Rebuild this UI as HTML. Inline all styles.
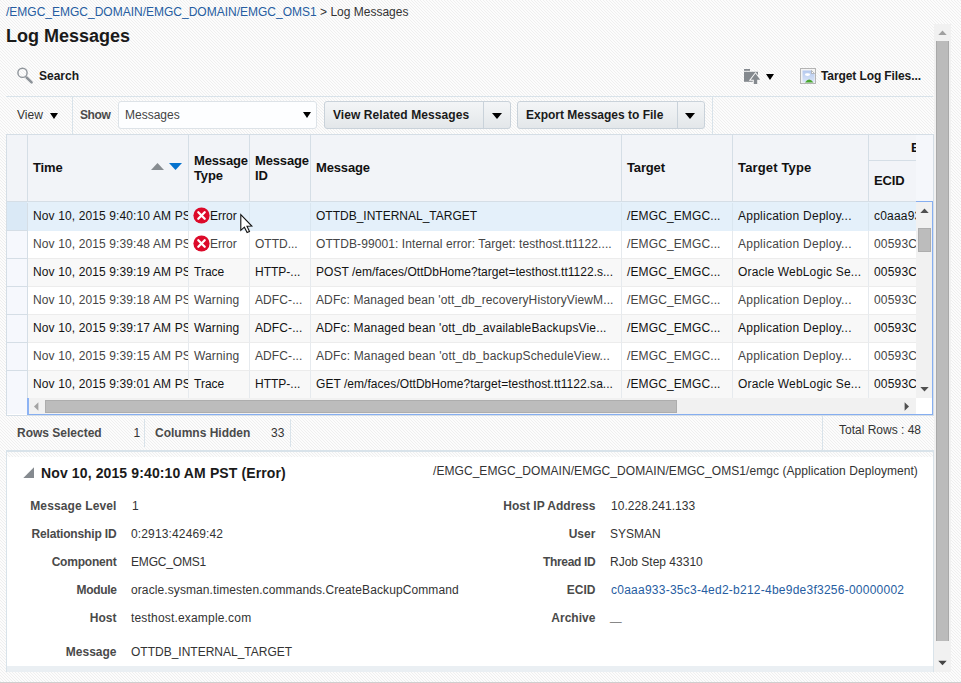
<!DOCTYPE html>
<html lang="en"><head><meta charset="utf-8"><title>Log Messages</title>
<style>
html,body{margin:0;padding:0}
body{width:961px;height:683px;position:relative;overflow:hidden;background:#f8f8f8;font-family:"Liberation Sans",Arial,sans-serif;font-size:12px;line-height:14px;color:#222}
#bg{position:absolute;left:0;top:0;width:961px;height:683px}
.a{position:absolute;white-space:nowrap}
.b{font-weight:bold}
.ln{position:absolute;background:#d9e3ea}
a{color:#265da1;text-decoration:none}
/* toolbar */
.btn{position:absolute;top:101px;height:26px;border:1px solid #c9d2da;border-radius:3px;background:linear-gradient(#f3f5f7,#e3e7ea);box-sizing:content-box}
.btn .dv{position:absolute;top:0;width:1px;height:26px;background:#c9d2da}
.btn .t{position:absolute;top:6px;font-weight:bold;color:#1a1a1a;white-space:nowrap}
.tri{position:absolute;width:0;height:0;border-left:5px solid transparent;border-right:5px solid transparent;border-top:6px solid #000}
#sel{position:absolute;left:118px;top:101px;width:197px;height:26px;border:1px solid #dde3e8;border-radius:3px;background:#fdfeff}
/* table */
#tbl{position:absolute;left:6px;top:134px;width:926px;height:280px;border:1px solid #d5dee6;background:#fff}
#hdr{position:absolute;left:7px;top:135px;width:926px;height:66px;background:#f2f4f8}
.h{position:absolute;font-weight:bold;font-size:13px;line-height:15px;color:#111;white-space:nowrap;letter-spacing:-0.15px}
.vb{position:absolute;width:1px;background:#d5dee6}
.row{position:absolute;left:7px;width:909px;height:28px;background:#fff}
.row.band{background:#f8f8f8}
.row.sel{background:#e4f0fa}
.row .rh{position:absolute;left:0;top:0;width:20px;height:27px;background:#f6f8fd;border-bottom:1px solid #d5dee6;border-right:1px solid #d5dee6}
.row.sel .rh{background:#dae9f6}
.row .c{position:absolute;top:0;height:28px;box-sizing:border-box;border-right:1px solid #e6eaee;border-bottom:1px solid #ececec;overflow:hidden;white-space:nowrap;line-height:14px;padding-top:6px;color:#131313}
.row.lt .c{color:#454545}
.row.sel .c{border-bottom-color:#e4f0fa;border-right-color:#d9e6f0}
.row .c6{border-right:none}
.err{position:absolute;left:4.2px;top:4.3px}
.et{position:absolute;left:21.1px;top:6px}
/* detail */
.lbl{position:absolute;font-weight:bold;color:#4a4a4a;text-align:right;white-space:nowrap}
.val{position:absolute;color:#333;white-space:nowrap}

</style></head>
<body>
<svg id="bg" width="961" height="683" shape-rendering="crispEdges"><defs><pattern id="st" width="3" height="3" patternUnits="userSpaceOnUse"><rect width="3" height="3" fill="#fcfcfc"/><rect x="0" y="0" width="1" height="1" fill="#efefef"/><rect x="1" y="1" width="1" height="1" fill="#efefef"/><rect x="2" y="2" width="1" height="1" fill="#efefef"/></pattern></defs><rect width="961" height="683" fill="url(#st)"/><rect x="0" y="682" width="961" height="1" fill="#cfcfcf"/></svg>

<div class="a" style="left:6px;top:5px"><a>/EMGC_EMGC_DOMAIN/EMGC_DOMAIN/EMGC_OMS1</a> <span style="color:#333">&gt; Log Messages</span></div>
<div class="a b" style="left:6px;top:26px;font-size:18px;line-height:20px;color:#1a1a1a">Log Messages</div>

<!-- search -->
<svg class="a" style="left:16px;top:67px" width="19" height="19" viewBox="0 0 19 19"><circle cx="6.5" cy="5.8" r="4.6" fill="none" stroke="#8f959b" stroke-width="1.4"/><path d="M10.6 10.5 L15.6 15.4" stroke="#8b9197" stroke-width="2.5" stroke-linecap="round"/></svg>
<div class="a b" style="left:39px;top:69px;color:#1a1a1a">Search</div>

<!-- top right icons -->
<svg class="a" style="left:743px;top:68px" width="19" height="17" viewBox="0 0 19 17"><rect x="1" y="1" width="6" height="1.8" fill="#84898e"/><rect x="1" y="3.8" width="14" height="10" fill="#84898e"/><path d="M12.5 5.6 L17.2 11.7 H14.2 V16 H10.8 V11.7 H7.8 Z" fill="#84898e" stroke="#f8f8f8" stroke-width="2" paint-order="stroke"/></svg>
<div class="tri" style="left:766px;top:74px;border-left-width:4.7px;border-right-width:4.7px"></div>
<svg class="a" style="left:800px;top:68px" width="16" height="16" viewBox="0 0 16 16"><rect x="0.5" y="0.5" width="15" height="15" fill="#f4f4f4" stroke="#b4b4b4"/><defs><linearGradient id="sky" x1="0" y1="0" x2="0" y2="1"><stop offset="0" stop-color="#b4c8ee"/><stop offset="1" stop-color="#dbe6f8"/></linearGradient></defs><path d="M2.5 2.5 H11.5 L14.5 5.5 V14.5 H2.5 Z" fill="url(#sky)"/><path d="M11.5 2.5 V5.5 H14.5 Z" fill="#fff" stroke="#999" stroke-width="0.6"/><ellipse cx="7.5" cy="6.6" rx="2.6" ry="1.3" fill="#fff"/><path d="M5 14.5 Q9 8.5 13.5 14.5 Z" fill="#4aa62e"/></svg>
<div class="a b" style="left:821px;top:69px;color:#1a1a1a;letter-spacing:-0.1px">Target Log Files...</div>

<!-- toolbar -->
<div class="ln" style="left:6px;top:96px;width:927px;height:1px"></div>
<div class="ln" style="left:72px;top:96px;width:1px;height:38px"></div>
<div class="ln" style="left:712px;top:96px;width:1px;height:38px"></div>
<div class="a" style="left:17px;top:108px;color:#333">View</div>
<div class="tri" style="left:50px;top:113px;border-left-width:4.5px;border-right-width:4.5px"></div>
<div class="a b" style="left:80px;top:108px;color:#4a4a4a;letter-spacing:-0.4px">Show</div>
<div id="sel"><div class="a" style="left:6px;top:6px;color:#444">Messages</div><div class="tri" style="left:184px;top:10px;border-left-width:4px;border-right-width:4px;border-top-width:6px"></div></div>
<div class="btn" style="left:324px;width:185px"><div class="t" style="left:8px;letter-spacing:0.08px">View Related Messages</div><div class="dv" style="left:158px"></div><div class="tri" style="left:166.5px;top:11px"></div></div>
<div class="btn" style="left:517px;width:186px"><div class="t" style="left:8px">Export Messages to File</div><div class="dv" style="left:159px"></div><div class="tri" style="left:167px;top:11px"></div></div>

<!-- table -->
<div id="tbl"></div>
<div id="hdr"></div>
<div class="h" style="left:33px;top:160px">Time</div>
<svg class="a" style="left:150px;top:162px" width="34" height="9" viewBox="0 0 34 9"><path d="M1 8 L7.5 1 L14 8 Z" fill="#878c91"/><path d="M19 1 L32 1 L25.5 8 Z" fill="#0572ce"/></svg>
<div class="h" style="left:194px;top:153px">Message<br>Type</div>
<div class="h" style="left:255px;top:153px">Message<br>ID</div>
<div class="h" style="left:316px;top:160px">Message</div>
<div class="h" style="left:627px;top:160px">Target</div>
<div class="h" style="left:738px;top:160px;letter-spacing:0.15px">Target Type</div>
<div class="h" style="left:874px;top:173px">ECID</div>
<div class="h" style="left:911px;top:140px;width:5px;overflow:hidden">E</div>
<div class="ln" style="left:869px;top:160px;width:47px;height:1px;background:#d5dee6"></div>
<div class="a" style="left:916px;top:135px;width:17px;height:66px;background:#f5f7fb"></div>
<div class="ln" style="left:6px;top:201px;width:927px;height:1px;background:#d5dee6"></div>
<div class="a" style="left:7px;top:202px;width:909px;height:1px;background:#e4f0fa"></div><div class="a" style="left:7px;top:202px;width:20px;height:1px;background:#dae9f6"></div>
<div id="rows">
<div class="row sel" style="top:203px">
<div class="rh"></div>
<div class="c c0" style="left:21px;width:161px;padding-left:5px;letter-spacing:0.12px">Nov 10, 2015 9:40:10 AM PST</div>
<div class="c c1" style="left:182px;width:61px;padding-left:5px"><svg class="err" width="17" height="17" viewBox="0 0 17 17"><circle cx="8.5" cy="8.5" r="8.1" fill="#dc0a2a"/><path d="M5.3 5.3 L11.7 11.7 M11.7 5.3 L5.3 11.7" stroke="#fff" stroke-width="2.3" stroke-linecap="round"/></svg><span class="et">Error</span></div>
<div class="c c2" style="left:243px;width:61px;padding-left:5px"></div>
<div class="c c3" style="left:304px;width:311px;padding-left:5px">OTTDB_INTERNAL_TARGET</div>
<div class="c c4" style="left:615px;width:111px;padding-left:5px;letter-spacing:0.12px">/EMGC_EMGC...</div>
<div class="c c5" style="left:726px;width:136px;padding-left:5px;letter-spacing:0.25px">Application Deploy...</div>
<div class="c c6" style="left:862px;width:48px;padding-left:5px;letter-spacing:0.2px">c0aaa933-35c3</div>
</div>
<div class="row lt" style="top:231px">
<div class="rh"></div>
<div class="c c0" style="left:21px;width:161px;padding-left:5px;letter-spacing:0.12px">Nov 10, 2015 9:39:48 AM PST</div>
<div class="c c1" style="left:182px;width:61px;padding-left:5px"><svg class="err" width="17" height="17" viewBox="0 0 17 17"><circle cx="8.5" cy="8.5" r="8.1" fill="#dc0a2a"/><path d="M5.3 5.3 L11.7 11.7 M11.7 5.3 L5.3 11.7" stroke="#fff" stroke-width="2.3" stroke-linecap="round"/></svg><span class="et">Error</span></div>
<div class="c c2" style="left:243px;width:61px;padding-left:5px">OTTD...</div>
<div class="c c3" style="left:304px;width:311px;padding-left:5px;letter-spacing:0.085px">OTTDB-99001: Internal error: Target: testhost.tt1122....</div>
<div class="c c4" style="left:615px;width:111px;padding-left:5px;letter-spacing:0.12px">/EMGC_EMGC...</div>
<div class="c c5" style="left:726px;width:136px;padding-left:5px;letter-spacing:0.25px">Application Deploy...</div>
<div class="c c6" style="left:862px;width:48px;padding-left:5px;letter-spacing:0.2px">00593Ckq</div>
</div>
<div class="row band" style="top:259px">
<div class="rh"></div>
<div class="c c0" style="left:21px;width:161px;padding-left:5px;letter-spacing:0.12px">Nov 10, 2015 9:39:19 AM PST</div>
<div class="c c1" style="left:182px;width:61px;padding-left:5px">Trace</div>
<div class="c c2" style="left:243px;width:61px;padding-left:5px">HTTP-...</div>
<div class="c c3" style="left:304px;width:311px;padding-left:5px;letter-spacing:0.02px">POST /em/faces/OttDbHome?target=testhost.tt1122.s...</div>
<div class="c c4" style="left:615px;width:111px;padding-left:5px;letter-spacing:0.12px">/EMGC_EMGC...</div>
<div class="c c5" style="left:726px;width:136px;padding-left:5px;letter-spacing:0.16px">Oracle WebLogic Se...</div>
<div class="c c6" style="left:862px;width:48px;padding-left:5px;letter-spacing:0.2px">00593Ckq</div>
</div>
<div class="row lt" style="top:287px">
<div class="rh"></div>
<div class="c c0" style="left:21px;width:161px;padding-left:5px;letter-spacing:0.12px">Nov 10, 2015 9:39:18 AM PST</div>
<div class="c c1" style="left:182px;width:61px;padding-left:5px;letter-spacing:0.15px">Warning</div>
<div class="c c2" style="left:243px;width:61px;padding-left:5px;letter-spacing:0.1px">ADFC-...</div>
<div class="c c3" style="left:304px;width:311px;padding-left:5px;letter-spacing:0.12px">ADFc: Managed bean 'ott_db_recoveryHistoryViewM...</div>
<div class="c c4" style="left:615px;width:111px;padding-left:5px;letter-spacing:0.12px">/EMGC_EMGC...</div>
<div class="c c5" style="left:726px;width:136px;padding-left:5px;letter-spacing:0.25px">Application Deploy...</div>
<div class="c c6" style="left:862px;width:48px;padding-left:5px;letter-spacing:0.2px">00593Ckq</div>
</div>
<div class="row band" style="top:315px">
<div class="rh"></div>
<div class="c c0" style="left:21px;width:161px;padding-left:5px;letter-spacing:0.12px">Nov 10, 2015 9:39:17 AM PST</div>
<div class="c c1" style="left:182px;width:61px;padding-left:5px;letter-spacing:0.15px">Warning</div>
<div class="c c2" style="left:243px;width:61px;padding-left:5px;letter-spacing:0.1px">ADFC-...</div>
<div class="c c3" style="left:304px;width:311px;padding-left:5px;letter-spacing:0.157px">ADFc: Managed bean 'ott_db_availableBackupsVie...</div>
<div class="c c4" style="left:615px;width:111px;padding-left:5px;letter-spacing:0.12px">/EMGC_EMGC...</div>
<div class="c c5" style="left:726px;width:136px;padding-left:5px;letter-spacing:0.25px">Application Deploy...</div>
<div class="c c6" style="left:862px;width:48px;padding-left:5px;letter-spacing:0.2px">00593Ckq</div>
</div>
<div class="row lt" style="top:343px">
<div class="rh"></div>
<div class="c c0" style="left:21px;width:161px;padding-left:5px;letter-spacing:0.12px">Nov 10, 2015 9:39:15 AM PST</div>
<div class="c c1" style="left:182px;width:61px;padding-left:5px;letter-spacing:0.15px">Warning</div>
<div class="c c2" style="left:243px;width:61px;padding-left:5px;letter-spacing:0.1px">ADFC-...</div>
<div class="c c3" style="left:304px;width:311px;padding-left:5px;letter-spacing:0.163px">ADFc: Managed bean 'ott_db_backupScheduleView...</div>
<div class="c c4" style="left:615px;width:111px;padding-left:5px;letter-spacing:0.12px">/EMGC_EMGC...</div>
<div class="c c5" style="left:726px;width:136px;padding-left:5px;letter-spacing:0.25px">Application Deploy...</div>
<div class="c c6" style="left:862px;width:48px;padding-left:5px;letter-spacing:0.2px">00593Ckq</div>
</div>
<div class="row band" style="top:371px">
<div class="rh"></div>
<div class="c c0" style="left:21px;width:161px;padding-left:5px;letter-spacing:0.12px">Nov 10, 2015 9:39:01 AM PST</div>
<div class="c c1" style="left:182px;width:61px;padding-left:5px">Trace</div>
<div class="c c2" style="left:243px;width:61px;padding-left:5px">HTTP-...</div>
<div class="c c3" style="left:304px;width:311px;padding-left:5px;letter-spacing:0.044px">GET /em/faces/OttDbHome?target=testhost.tt1122.sa...</div>
<div class="c c4" style="left:615px;width:111px;padding-left:5px;letter-spacing:0.12px">/EMGC_EMGC...</div>
<div class="c c5" style="left:726px;width:136px;padding-left:5px;letter-spacing:0.16px">Oracle WebLogic Se...</div>
<div class="c c6" style="left:862px;width:48px;padding-left:5px;letter-spacing:0.2px">00593Ckq</div>
</div>
</div>
<!-- header/col borders -->
<div class="vb" style="left:27px;top:135px;height:67px"></div>
<div class="vb" style="left:188px;top:135px;height:67px"></div>
<div class="vb" style="left:249px;top:135px;height:67px"></div>
<div class="vb" style="left:310px;top:135px;height:67px"></div>
<div class="vb" style="left:621px;top:135px;height:67px"></div>
<div class="vb" style="left:732px;top:135px;height:67px"></div>
<div class="vb" style="left:868px;top:135px;height:67px"></div>

<!-- vertical scrollbar -->
<div class="a" style="left:916px;top:201px;width:16px;height:197px;background:#f1f1f1;border-top:1px solid #86aef0;border-right:1px solid #86aef0"></div>
<div class="a" style="left:918px;top:228px;width:13px;height:24px;background:#bcbcbc;box-shadow:inset 0 0 0 1px #adadad"></div>
<svg class="a" style="left:920px;top:208px" width="9" height="6" viewBox="0 0 9 6"><path d="M0.3 5 L4.5 0.6 L8.7 5 Z" fill="#505050"/></svg>
<svg class="a" style="left:920px;top:386px" width="9" height="6" viewBox="0 0 9 6"><path d="M0.3 1 L4.5 5.4 L8.7 1 Z" fill="#505050"/></svg>
<!-- horizontal scrollbar -->
<div class="a" style="left:7px;top:398px;width:20px;height:16px;background:#f6f8fd"></div>
<div class="a" style="left:27px;top:398px;width:887px;height:16px;background:#f1f1f1;border-left:2px solid #8db3f4;border-bottom:1px solid #86aef0"></div>
<div class="a" style="left:916px;top:398px;width:16px;height:16px;background:#fff;border-right:1px solid #86aef0;border-bottom:1px solid #86aef0"></div>
<div class="a" style="left:45px;top:400px;width:632px;height:13px;background:#bcbcbc;box-shadow:inset 0 0 0 1px #adadad"></div>
<svg class="a" style="left:33px;top:402px" width="6" height="9" viewBox="0 0 6 9"><path d="M5.4 0.3 L1 4.5 L5.4 8.7 Z" fill="#a3a3a3"/></svg>
<svg class="a" style="left:904px;top:402px" width="6" height="9" viewBox="0 0 6 9"><path d="M0.6 0.3 L5 4.5 L0.6 8.7 Z" fill="#505050"/></svg>

<!-- cursor -->
<svg class="a" style="left:239px;top:212px" width="15" height="22" viewBox="0 0 15 22"><path d="M1.8 2.6 L1.8 18.4 L5.4 15.2 L8.1 20.6 L10.5 19.5 L8 14.3 L12.8 14.1 Z" fill="#fff" stroke="#111" stroke-width="1.1" stroke-linejoin="miter"/></svg>

<!-- status bar -->
<div class="a b" style="left:17px;top:426px;color:#4a4a4a">Rows Selected</div>
<div class="a" style="left:133.5px;top:426px;color:#333">1</div>
<div class="ln" style="left:144px;top:419px;width:1px;height:28px"></div>
<div class="a b" style="left:155px;top:426px;color:#4a4a4a">Columns Hidden</div>
<div class="a" style="left:271px;top:426px;color:#333">33</div>
<div class="ln" style="left:290px;top:419px;width:1px;height:28px"></div>
<div class="ln" style="left:822px;top:416px;width:1px;height:34px"></div>
<div class="a" style="left:839px;top:423px;color:#333">Total Rows : 48</div>

<!-- detail panel -->
<div class="a" style="left:6px;top:450px;width:927px;height:222px;border-left:1px solid #d9e3ea;border-top:2px solid #d9e3ea;box-sizing:border-box"></div>
<div class="a" style="left:7px;top:457px;width:926px;height:209px;background:#fff"></div>
<div class="a" style="left:7px;top:666px;width:927px;height:6px;background:#eaeff3"></div>
<div class="ln" style="left:933px;top:450px;width:1px;height:222px;background:#d9e3ea"></div>
<svg class="a" style="left:23px;top:467px" width="12" height="12" viewBox="0 0 12 12"><path d="M0.3 11 L11 0.3 L11 11 Z" fill="#858a8f"/></svg>
<div class="a b" style="left:41px;top:465px;font-size:14px;line-height:16px;color:#1a1a1a;letter-spacing:0.12px">Nov 10, 2015 9:40:10 AM PST (Error)</div>
<div class="a" style="left:433px;top:464px;color:#333;letter-spacing:0.06px">/EMGC_EMGC_DOMAIN/EMGC_DOMAIN/EMGC_OMS1/emgc (Application Deployment)</div>

<div class="lbl" style="left:16.5px;width:100px;top:499px;letter-spacing:0.12px">Message Level</div><div class="val" style="left:132px;top:499px">1</div>
<div class="lbl" style="left:16.5px;width:100px;top:527px;letter-spacing:-0.15px">Relationship ID</div><div class="val" style="left:131px;top:527px;letter-spacing:0.14px">0:2913:42469:42</div>
<div class="lbl" style="left:16.5px;width:100px;top:555px;letter-spacing:-0.2px">Component</div><div class="val" style="left:131px;top:555px;letter-spacing:-0.18px">EMGC_OMS1</div>
<div class="lbl" style="left:16.5px;width:100px;top:583px;letter-spacing:-0.35px">Module</div><div class="val" style="left:131px;top:583px;letter-spacing:0.096px">oracle.sysman.timesten.commands.CreateBackupCommand</div>
<div class="lbl" style="left:16.5px;width:100px;top:611px">Host</div><div class="val" style="left:131px;top:611px;letter-spacing:0.18px">testhost.example.com</div>
<div class="lbl" style="left:16.5px;width:100px;top:645px">Message</div><div class="val" style="left:131px;top:645px">OTTDB_INTERNAL_TARGET</div>

<div class="lbl" style="left:475.4px;width:120px;top:499px">Host IP Address</div><div class="val" style="left:611px;top:499px;letter-spacing:0.06px">10.228.241.133</div>
<div class="lbl" style="left:475.4px;width:120px;top:527px">User</div><div class="val" style="left:610px;top:527px">SYSMAN</div>
<div class="lbl" style="left:475.4px;width:120px;top:555px;letter-spacing:-0.33px">Thread ID</div><div class="val" style="left:610px;top:555px">RJob Step 43310</div>
<div class="lbl" style="left:475.4px;width:120px;top:583px">ECID</div><div class="val" style="left:611px;top:583px"><a style="letter-spacing:0.245px">c0aaa933-35c3-4ed2-b212-4be9de3f3256-00000002</a></div>
<div class="lbl" style="left:475.4px;width:120px;top:611px">Archive</div><div class="val" style="left:610px;top:610px;font-size:10.5px;color:#666">__</div>

<!-- page scrollbar -->
<div class="a" style="left:934px;top:24px;width:17px;height:648px;background:#f1f1f1"></div>
<div class="a" style="left:936px;top:41px;width:13px;height:600px;background:#bbb;box-shadow:inset 1px 0 #a9a9a9,inset -1px 0 #a9a9a9"></div>
<svg class="a" style="left:938px;top:30px" width="9" height="6" viewBox="0 0 9 6"><path d="M0.3 5 L4.5 0.6 L8.7 5 Z" fill="#a0a0a0"/></svg>
<svg class="a" style="left:938px;top:660px" width="9" height="6" viewBox="0 0 9 6"><path d="M0.3 0.8 L4.5 5.2 L8.7 0.8 Z" fill="#444"/></svg>
</body></html>
